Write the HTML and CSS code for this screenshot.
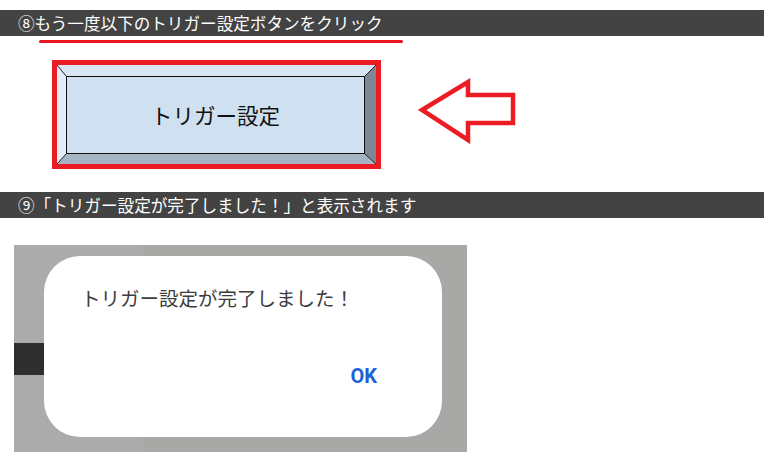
FILE: index.html
```html
<!DOCTYPE html>
<html lang="ja">
<head>
<meta charset="utf-8">
<link rel="stylesheet" href="styles.css">
</head>
<body>
<div class="bar bar-first">⑧もう一度以下のトリガー設定ボタンをクリック</div>
<div class="underline"></div>
<div class="row">
  <div class="frame">
    <div class="bevel">
      <div class="face">トリガー設定</div>
      <svg class="corners" width="319" height="99" viewBox="0 0 319 99">
        <g stroke="#222" stroke-width="1">
          <line x1="0" y1="0" x2="9" y2="11"/>
          <line x1="319" y1="0" x2="308" y2="11"/>
          <line x1="0" y1="99" x2="9" y2="89"/>
          <line x1="319" y1="99" x2="308" y2="89"/>
        </g>
      </svg>
    </div>
  </div>
  <svg class="arrow" width="100" height="66" viewBox="0 0 100 66">
    <polygon points="4,32 50,4 50,17 95,17 95,45 50,45 50,62" fill="#fff" stroke="#ec1c24" stroke-width="4.5" stroke-linejoin="miter"/>
  </svg>
</div>
<div class="bar bar-second">⑨「トリガー設定が完了しました！」と表示されます</div>
<div class="shot">
  <div class="darkbar"></div>
  <div class="dialog">
    <div class="msg">トリガー設定が完了しました！</div>
    <div class="ok">OK</div>
  </div>
</div>
</body>
</html>
```
FILE: styles.css
```css
html, body {
  margin: 0;
  padding: 0;
  background: #fff;
}
body {
  width: 764px;
  height: 469px;
  overflow: hidden;
  font-family: "Noto Sans CJK JP", "Noto Sans", sans-serif;
}
.bar {
  height: 26px;
  line-height: 26px;
  background: #434343;
  color: #fff;
  font-size: 16.6px;
  padding-left: 18px;
  white-space: nowrap;
}
.bar-first {
  margin-top: 10px;
}
.underline {
  margin: 4px 0 0 39px;
  width: 364px;
  height: 3px;
  background: #e8141e;
  border-radius: 2px;
}
.row {
  display: flex;
  align-items: flex-start;
  margin-top: 17px;
  padding-left: 52px;
}
.frame {
  border: 5px solid #ec1c24;
  width: 319px;
  height: 99px;
}
.bevel {
  position: relative;
  box-sizing: border-box;
  width: 319px;
  height: 99px;
  border-style: solid;
  border-width: 11px 11px 10px 9px;
  border-color: #d9e6f3 #7e8892 #a6b5c4 #e3edf8;
}
.corners {
  position: absolute;
  left: -9px;
  top: -11px;
}
.face {
  box-sizing: border-box;
  height: 100%;
  border: 1px solid #111;
  background: #cfe0f1;
  display: flex;
  align-items: center;
  justify-content: center;
  font-size: 21.5px;
  color: #111;
  padding-bottom: 2px;
}
.arrow {
  display: block;
  margin-left: 37px;
  margin-top: 18px;
}
.bar-second {
  margin-top: 23px;
}
.shot {
  position: relative;
  margin: 27px 0 0 14px;
  width: 453px;
  height: 207px;
  background: linear-gradient(to right, #ababab 0 129px, #a8a9a6 129px);
  padding-top: 11px;
  box-sizing: border-box;
}
.darkbar {
  position: absolute;
  left: 0;
  top: 98px;
  width: 30px;
  height: 32px;
  background: #2e2e2e;
}
.dialog {
  position: relative;
  margin-left: 30px;
  width: 398px;
  height: 181px;
  background: #fff;
  border-radius: 36px;
  box-sizing: border-box;
  padding: 28px 65px 0 37px;
  display: flex;
  flex-direction: column;
}
.msg {
  font-size: 19.5px;
  line-height: 28px;
  color: #3d3d3d;
  white-space: nowrap;
}
.ok {
  align-self: flex-end;
  margin-top: 52px;
  font-family: Roboto, "Noto Sans", sans-serif;
  font-weight: 700;
  font-size: 20px;
  line-height: 24px;
  color: #1a62d6;
}
```
